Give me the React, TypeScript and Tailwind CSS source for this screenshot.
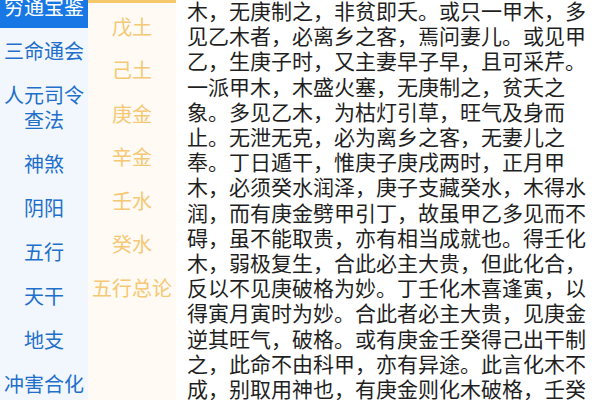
const books = ['穷通宝鉴', '三命通会', '人元司令查法', '神煞', '阴阳', '五行', '天干', '地支', '冲害合化'];
const chapters = ['戊土', '己土', '庚金', '辛金', '壬水', '癸水', '五行总论'];

const body =
  '木，无庚制之，非贫即夭。或只一甲木，多见乙木者，必离乡之客，焉问妻儿。或见甲乙，生庚子时，又主妻早子早，且可采芹。一派甲木，木盛火塞，无庚制之，贫夭之象。多见乙木，为枯灯引草，旺气及身而止。无泄无克，必为离乡之客，无妻儿之奉。丁日遁干，惟庚子庚戌两时，正月甲木，必须癸水润泽，庚子支藏癸水，木得水润，而有庚金劈甲引丁，故虽甲乙多见而不碍，虽不能取贵，亦有相当成就也。得壬化木，弱极复生，合此必主大贵，但此化合，反以不见庚破格为妙。丁壬化木喜逢寅，以得寅月寅时为妙。合此者必主大贵，见庚金逆其旺气，破格。或有庚金壬癸得己出干制之，此命不由科甲，亦有异途。此言化木不成，别取用神也，有庚金则化木破格，壬癸透干，富贵双全。';

export default function App() {
  return (
    <div
      className="flex h-[400px] w-[600px] overflow-hidden bg-white"
      style={{ fontFamily: '"Noto Sans CJK SC", "Noto Sans", sans-serif' }}
    >
      {/* book list */}
      <div className="w-[88px] shrink-0 bg-[#f1f7fd]">
        <div className="-mt-[16px]">
          {books.map((b, i) => (
            <div
              key={b}
              className={
                i === 0
                  ? 'bg-[#1677e5] px-[4px] py-[9.5px] text-center text-[20px] leading-[25px] text-white'
                  : 'px-[4px] py-[9.5px] text-center text-[20px] leading-[25px] text-[#1f6fcb]'
              }
            >
              {b === '人元司令查法' ? (
                <>
                  人元司令
                  <br />
                  查法
                </>
              ) : (
                b
              )}
            </div>
          ))}
        </div>
      </div>

      {/* chapter list */}
      <div className="w-[88px] shrink-0 bg-[#fffaf3]">
        <div className="h-[3px] bg-[#f6c86c]" />
        <div className="pt-[2px]">
          {chapters.map((c) => (
            <div
              key={c}
              className="flex h-[43.5px] items-center justify-center text-[20px] text-[#f4c874]"
            >
              {c}
            </div>
          ))}
        </div>
      </div>

      {/* article */}
      <div className="flex-1 pl-[11px]">
        <p className="-mt-[2px] w-[405px] text-[21px] leading-[25.2px] text-[#1f1f1f]">{body}</p>
      </div>
    </div>
  );
}
